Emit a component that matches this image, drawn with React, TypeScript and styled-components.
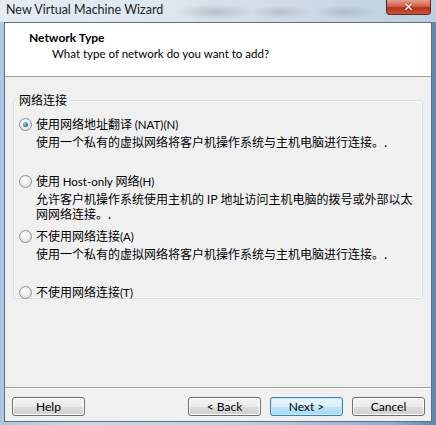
import styled, { createGlobalStyle } from 'styled-components';

const GlobalStyle = createGlobalStyle`
  html, body {
    margin: 0;
    padding: 0;
    background: #c5d5e6;
  }
  body {
    font-family: Lato, "Noto Sans CJK SC", sans-serif;
  }
`;

const Window = styled.div`
  width: 436px;
  height: 425px;
  box-sizing: border-box;
  display: flex;
  flex-direction: column;
  padding: 0 4px 3px 4px;
  background: linear-gradient(90deg, #adc7e0 0%, #c9d9e9 20%, #bdd0e3 55%, #8fb0d0 90%, #5f86ad 100%);
  overflow: hidden;
`;

const TitleBar = styled.div`
  height: 22px;
  flex: none;
  display: flex;
  align-items: flex-start;
  justify-content: space-between;
  margin: 0 -4px;
  padding: 0 4px 0 6px;
  background:
    radial-gradient(ellipse 40px 8px at 215px 12px, rgba(120, 130, 140, 0.35), transparent),
    radial-gradient(ellipse 30px 7px at 280px 12px, rgba(120, 130, 140, 0.3), transparent),
    radial-gradient(ellipse 30px 7px at 345px 12px, rgba(120, 130, 140, 0.3), transparent),
    linear-gradient(90deg, #e4ecf4 0%, #dde6ef 40%, #cdd9e5 70%, #bccee0 100%);
`;

const Title = styled.span`
  font-family: Lato, "Noto Sans", sans-serif;
  font-size: 12.5px;
  color: #1e1e1e;
  margin-top: 2px;
`;

const CloseButton = styled.div`
  width: 43px;
  height: 14px;
  margin-right: 1px;
  border: 1px solid #5e2a22;
  border-top: none;
  border-radius: 0 0 4px 4px;
  background: linear-gradient(180deg, #e5a08f 0%, #d0604a 45%, #b8321d 55%, #c9543c 100%);
  display: flex;
  align-items: center;
  justify-content: center;
  color: #fff;
  font-family: "DejaVu Sans", sans-serif;
  font-weight: bold;
  font-size: 12px;
  line-height: 1;
  text-shadow: 0 0 2px #5a1a10;
`;

const Client = styled.div`
  flex: 1;
  display: flex;
  flex-direction: column;
  border: 1px solid #5c6f84;
  background: #f0f0f0;
  min-height: 0;
`;

const Header = styled.div`
  height: 54px;
  flex: none;
  background: #fff;
  border-bottom: 1px solid #a0a0a0;
  padding: 7px 0 0 24px;
  box-sizing: border-box;
`;

const HeaderTitle = styled.div`
  font-family: Lato, "Noto Sans", sans-serif;
  font-weight: bold;
  font-size: 12px;
  color: #000;
  line-height: 16px;
`;

const HeaderSub = styled.div`
  font-family: Lato, "Noto Sans", sans-serif;
  font-size: 11.5px;
  color: #000;
  line-height: 16px;
  padding-left: 23px;
`;

const Body = styled.div`
  flex: 1;
  padding: 15px 8px 0 8px;
  border-bottom: 1px solid #a0a0a0;
  box-shadow: 0 1px 0 #fff;
`;

const Group = styled.fieldset`
  margin: 0;
  height: 207px;
  border: 1px solid #d5dfe5;
  border-radius: 3px;
  padding: 6px 6px 0 5px;
  box-sizing: border-box;
  box-shadow: inset 0 0 0 1px #fff;
`;

const Legend = styled.legend`
  font-family: "Noto Sans CJK SC", sans-serif;
  font-size: 12px;
  color: #000;
  padding: 0 1px;
  margin-left: -1px;
  line-height: 16px;
`;

const Option = styled.div<{ $gap: number }>`
  margin-top: ${({ $gap }) => $gap}px;
`;

const OptionLabel = styled.label`
  display: flex;
  align-items: center;
  gap: 4px;
  font-family: "Noto Sans CJK SC", sans-serif;
  font-size: 12px;
  line-height: 16px;
  color: #000;
`;

const Latin = styled.span`
  font-family: Lato, "Noto Sans", sans-serif;
  font-size: 11.5px;
`;

const Description = styled.div`
  font-family: "Noto Sans CJK SC", sans-serif;
  font-size: 12px;
  line-height: 15px;
  color: #000;
  padding-left: 17px;
  margin-top: 1px;
  width: 378px;
`;

const RadioCircle = styled.span<{ $checked?: boolean }>`
  width: 11px;
  height: 11px;
  flex: none;
  border-radius: 50%;
  border: 1px solid #8f8f8f;
  background: radial-gradient(circle at 40% 35%, #fdfdfd 0%, #e8e8e8 60%, #d4d4d4 100%);
  display: flex;
  align-items: center;
  justify-content: center;
  &::after {
    content: '';
    display: ${({ $checked }) => ($checked ? 'block' : 'none')};
    width: 5px;
    height: 5px;
    border-radius: 50%;
    background: radial-gradient(circle at 40% 35%, #9fdcff 0%, #2d7fbf 55%, #14517f 100%);
  }
`;

const Footer = styled.div`
  height: 33px;
  flex: none;
  box-sizing: border-box;
  display: flex;
  align-items: flex-start;
  padding: 9px 6px 0 7px;
  gap: 9px;
`;

const Spacer = styled.div`
  flex: 1;
`;

const Button = styled.button<{ $default?: boolean }>`
  width: 73px;
  height: 19px;
  padding: 0;
  border-radius: 3px;
  border: 1px solid ${({ $default }) => ($default ? '#3c7fb1' : '#707070')};
  background: ${({ $default }) =>
    $default
      ? 'linear-gradient(180deg, #eaf6fd 0%, #d9f0fc 50%, #bee6fd 51%, #a7d9f5 100%)'
      : 'linear-gradient(180deg, #f2f2f2 0%, #ebebeb 50%, #dddddd 51%, #cfcfcf 100%)'};
  box-shadow: inset 0 0 0 1px ${({ $default }) => ($default ? '#c8ecfb' : '#fcfcfc')};
  font-family: Lato, "Noto Sans", sans-serif;
  font-size: 12px;
  line-height: 1;
  color: #000;
`;

const options = [
  {
    label: (
      <>
        使用网络地址翻译 <Latin>(NAT)(N)</Latin>
      </>
    ),
    desc: '使用一个私有的虚拟网络将客户机操作系统与主机电脑进行连接。.',
    checked: true,
    gap: 2,
  },
  {
    label: (
      <>
        使用 <Latin>Host-only</Latin> 网络<Latin>(H)</Latin>
      </>
    ),
    desc: '允许客户机操作系统使用主机的 IP 地址访问主机电脑的拨号或外部以太网网络连接。.',
    gap: 24,
  },
  {
    label: (
      <>
        不使用网络连接<Latin>(A)</Latin>
      </>
    ),
    desc: '使用一个私有的虚拟网络将客户机操作系统与主机电脑进行连接。.',
    gap: 7,
  },
  {
    label: (
      <>
        不使用网络连接<Latin>(T)</Latin>
      </>
    ),
    gap: 23,
  },
];

export default function App() {
  return (
    <>
      <GlobalStyle />
      <Window>
        <TitleBar>
          <Title>New Virtual Machine Wizard</Title>
          <CloseButton>✕</CloseButton>
        </TitleBar>
        <Client>
          <Header>
            <HeaderTitle>Network Type</HeaderTitle>
            <HeaderSub>What type of network do you want to add?</HeaderSub>
          </Header>
          <Body>
            <Group>
              <Legend>网络连接</Legend>
              {options.map((o, i) => (
                <Option key={i} $gap={o.gap}>
                  <OptionLabel>
                    <RadioCircle $checked={o.checked} />
                    <span>{o.label}</span>
                  </OptionLabel>
                  {o.desc && <Description>{o.desc}</Description>}
                </Option>
              ))}
            </Group>
          </Body>
          <Footer>
            <Button>Help</Button>
            <Spacer />
            <Button>&lt; Back</Button>
            <Button $default>Next &gt;</Button>
            <Button>Cancel</Button>
          </Footer>
        </Client>
      </Window>
    </>
  );
}
